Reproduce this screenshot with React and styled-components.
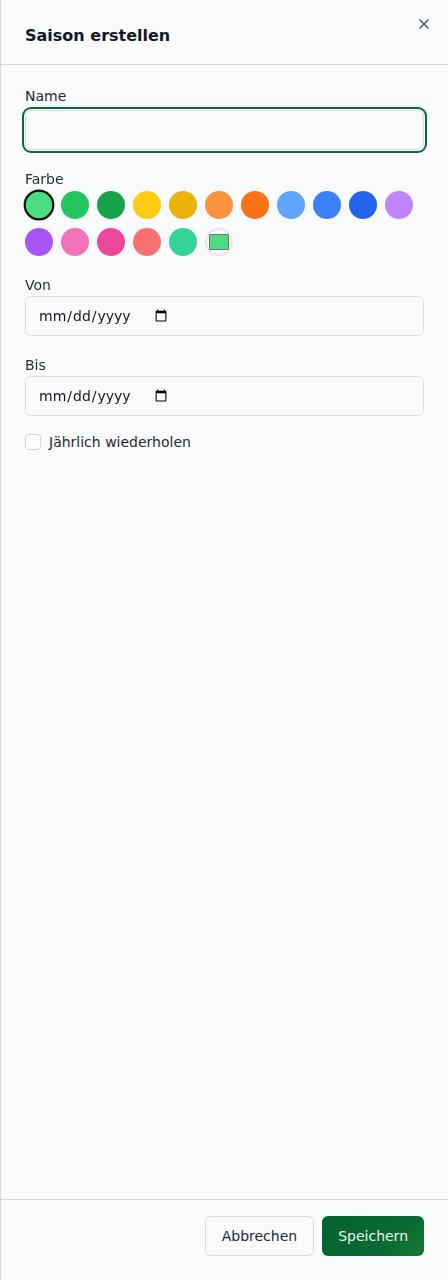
import React from "react";
import styled, { createGlobalStyle } from "styled-components";
import { X } from "lucide-react";

const GlobalStyle = createGlobalStyle`
  html, body {
    margin: 0;
    padding: 0;
    background: #f8fafc;
  }
  * {
    box-sizing: border-box;
  }
  body {
    font-family: "DejaVu Sans", "Liberation Sans", sans-serif;
  }
`;

const COLORS = [
  "#4ade80",
  "#22c55e",
  "#16a34a",
  "#facc15",
  "#eab308",
  "#fb923c",
  "#f97316",
  "#60a5fa",
  "#3b82f6",
  "#2563eb",
  "#c084fc",
  "#a855f7",
  "#f472b6",
  "#ec4899",
  "#f87171",
  "#34d399",
];

export default function App() {
  const selected = COLORS[0];
  return (
    <>
      <GlobalStyle />
      <Sheet>
        <Header>
          <Title>Saison erstellen</Title>
          <CloseButton aria-label="Schließen">
            <X size={16} strokeWidth={2} />
          </CloseButton>
        </Header>

        <Body>
          <Field>
            <Label htmlFor="name">Name</Label>
            <TextInput id="name" type="text" autoFocus $spaced />
          </Field>

          <Field>
            <Label>Farbe</Label>
            <Swatches>
              {COLORS.map((c) => (
                <Swatch key={c} $color={c} $active={c === selected} />
              ))}
              <ColorPicker type="color" defaultValue={selected} />
            </Swatches>
          </Field>

          <Field>
            <Label htmlFor="von">Von</Label>
            <TextInput id="von" type="date" />
          </Field>

          <Field>
            <Label htmlFor="bis">Bis</Label>
            <TextInput id="bis" type="date" />
          </Field>

          <CheckRow>
            <Checkbox type="checkbox" />
            <span>Jährlich wiederholen</span>
          </CheckRow>
        </Body>

        <Footer>
          <Button>Abbrechen</Button>
          <Button $primary>Speichern</Button>
        </Footer>
      </Sheet>
    </>
  );
}

const Sheet = styled.div`
  display: flex;
  flex-direction: column;
  height: 1280px;
  background: #f8fafc;
  border-left: 1px solid #d4d8de;
`;

const Header = styled.div`
  position: relative;
  padding: 24px 24px 16px;
  border-bottom: 1px solid #d4d8de;
`;

const Title = styled.h2`
  margin: 0;
  font-size: 16px;
  line-height: 24px;
  font-weight: 700;
  color: #111827;
`;

const CloseButton = styled.button`
  position: absolute;
  top: 16px;
  right: 16px;
  width: 16px;
  height: 16px;
  padding: 0;
  border: none;
  background: transparent;
  color: #4b5563;
  display: flex;
  align-items: center;
  justify-content: center;
  cursor: pointer;
`;

const Body = styled.div`
  flex: 1;
  display: flex;
  flex-direction: column;
  gap: 19px;
  padding: 21px 24px 0;
`;

const Field = styled.div`
  display: flex;
  flex-direction: column;
`;

const Label = styled.label`
  font-size: 14px;
  line-height: 20px;
  color: #1f2937;
  margin-bottom: 1px;
`;

const TextInput = styled.input`
  height: 40px;
  width: 100%;
  margin-top: ${(p) => (p.$spaced ? "3px" : "0")};
  padding: 0 12px;
  border: 1px solid #d9dce1;
  border-radius: 6px;
  background: #f8fafc;
  font-family: "DejaVu Sans", "Liberation Sans", sans-serif;
  font-size: 14px;
  color: #111827;
  caret-color: #111827;

  &::-webkit-datetime-edit {
    flex: none;
  }

  &::-webkit-calendar-picker-indicator {
    margin-left: 0;
  }

  &:focus {
    outline: 2px solid #0b6b35;
    outline-offset: 1px;
  }
`;

const Swatches = styled.div`
  display: flex;
  flex-wrap: wrap;
  gap: 9px 8px;
  padding-top: 1px;
`;

const Swatch = styled.button`
  width: 28px;
  height: 28px;
  padding: 0;
  border-radius: 50%;
  background: ${(p) => p.$color};
  border: ${(p) => (p.$active ? "2px solid #111111" : "none")};
  transform: ${(p) => (p.$active ? "scale(1.1)" : "none")};
  cursor: pointer;
`;

const ColorPicker = styled.input`
  width: 28px;
  height: 28px;
  padding: 0;
  border: 2px solid #e5e7eb;
  border-radius: 50%;
  background: transparent;
  cursor: pointer;
`;

const CheckRow = styled.label`
  display: flex;
  align-items: center;
  gap: 8px;
  font-size: 14px;
  color: #1f2937;
  margin-top: -1px;
`;

const Checkbox = styled.input`
  appearance: none;
  margin: 0;
  width: 16px;
  height: 16px;
  border: 1px solid #d1d5db;
  border-radius: 4px;
  background: #ffffff;
`;

const Footer = styled.div`
  display: flex;
  justify-content: flex-end;
  gap: 8px;
  padding: 16px 24px 24px;
  border-top: 1px solid #d4d8de;
`;

const Button = styled.button`
  height: 40px;
  padding: 0 16px;
  border-radius: 6px;
  font-family: "DejaVu Sans", "Liberation Sans", sans-serif;
  font-size: 14px;
  cursor: pointer;
  border: ${(p) => (p.$primary ? "none" : "1px solid #d9dce1")};
  background: ${(p) =>
    p.$primary
      ? "linear-gradient(135deg, #05612f 0%, #0a6a32 65%, #167a34 100%)"
      : "#f8fafc"};
  color: ${(p) => (p.$primary ? "#e8f5ec" : "#1f2937")};
`;
